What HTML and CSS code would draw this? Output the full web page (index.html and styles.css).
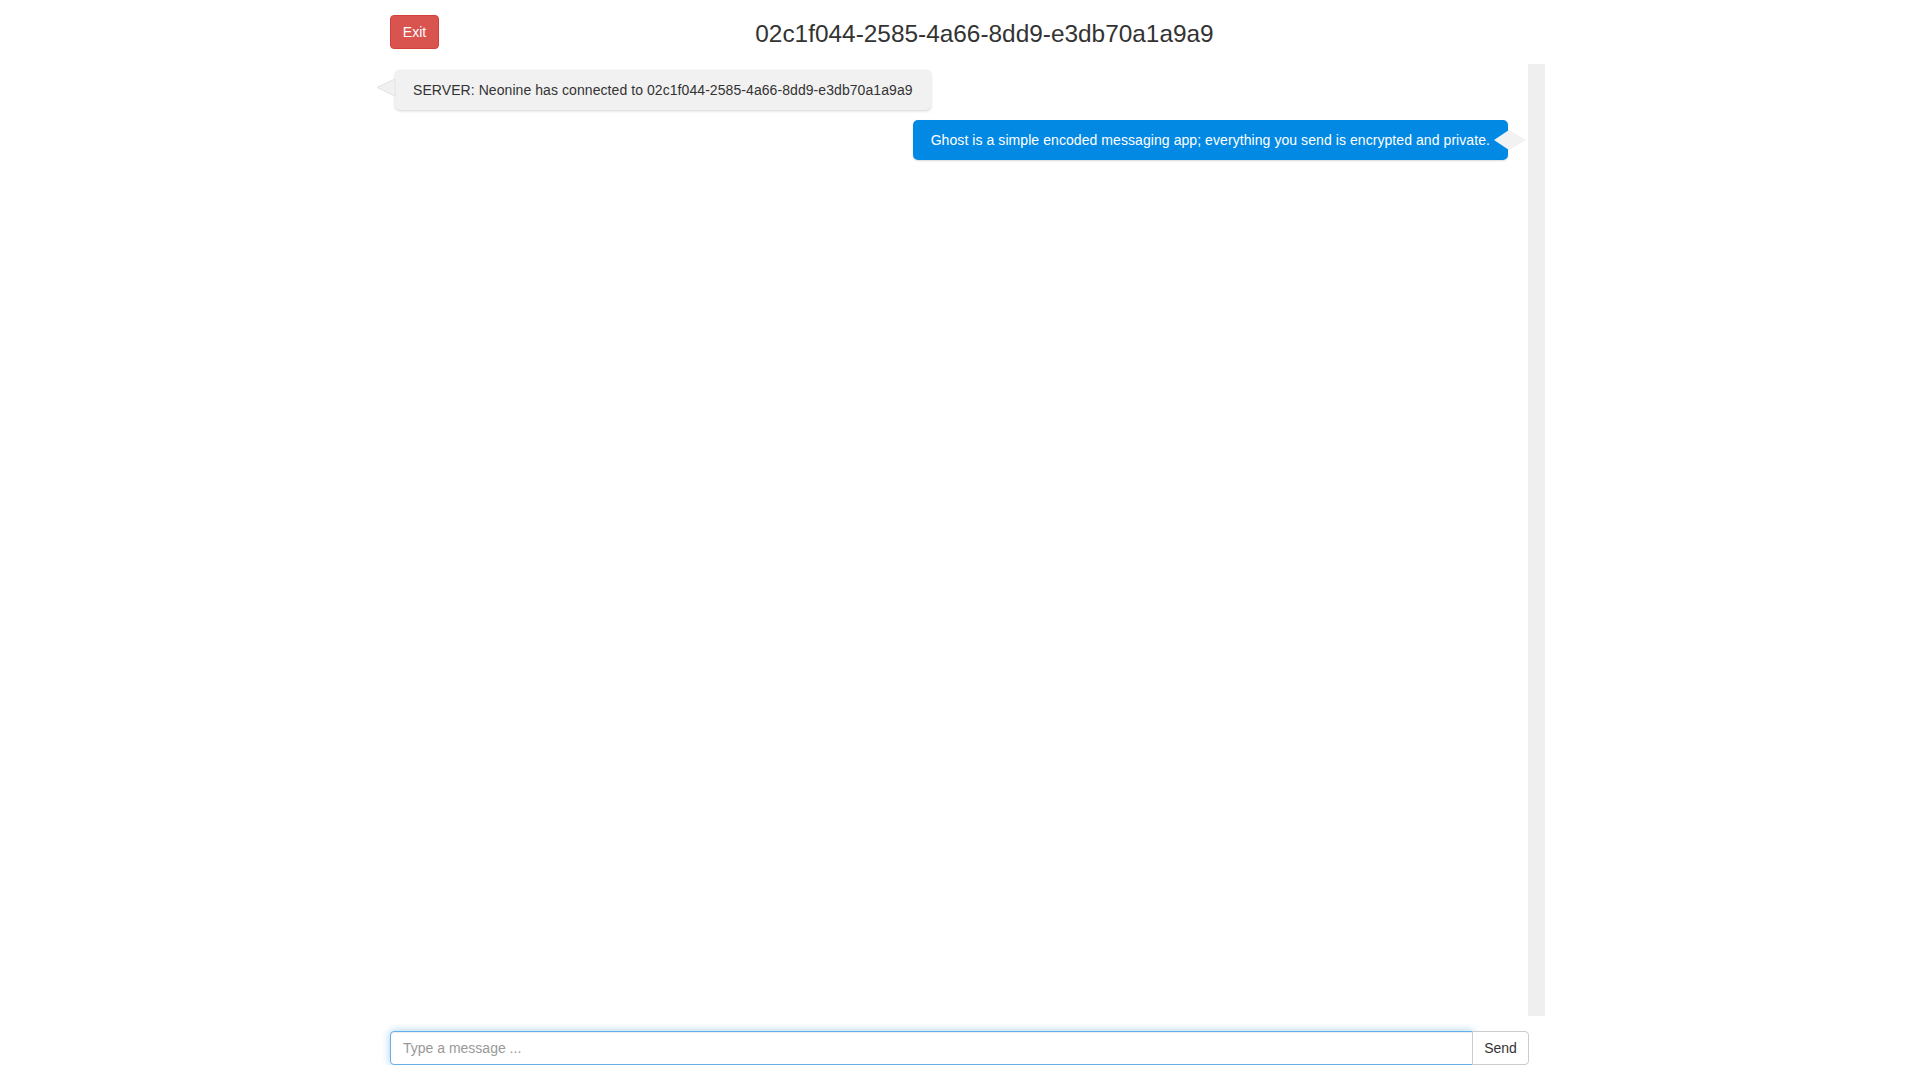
FILE: index.html
```html
<!DOCTYPE html>
<html>
<head>
<meta charset="utf-8">
<title>Ghost</title>
<link rel="stylesheet" href="styles.css">
</head>
<body>
<div class="page">
  <div class="header">
    <button class="btn-exit">Exit</button>
    <h1 class="room-title">02c1f044-2585-4a66-8dd9-e3db70a1a9a9</h1>
  </div>
  <div class="chat">
    <div class="messages">
      <div class="msg msg-server">
        <svg class="arrow-left" width="20" height="20" viewBox="0 0 20 20"><polygon points="19,1 1,9.5 19,18" fill="#f1f1f1" stroke="#e2e2e2" stroke-width="1"/></svg>
        SERVER: Neonine has connected to 02c1f044-2585-4a66-8dd9-e3db70a1a9a9
      </div>
      <div class="msg msg-own">
        Ghost is a simple encoded messaging app; everything you send is encrypted and private.
        <svg class="arrow-right" width="34" height="22" viewBox="0 0 34 22"><polygon points="1,11 16,1 33,11 16,21" fill="#f2f2f2"/></svg>
      </div>
    </div>
    <div class="track"></div>
  </div>
  <div class="composer">
    <input class="msg-input" type="text" placeholder="Type a message ..." autofocus>
    <button class="btn-send">Send</button>
  </div>
</div>
</body>
</html>
```
FILE: styles.css
```css
html, body {
  margin: 0;
  padding: 0;
  background: #fff;
}
body {
  font-family: "Liberation Sans", Arial, sans-serif;
  font-size: 14px;
  color: #333;
}
.page {
  width: 1140px;
  margin: 0 auto;
  padding-top: 15px;
}
.header {
  display: flex;
  align-items: center;
  height: 34px;
}
.btn-exit {
  width: 49px;
  height: 34px;
  background: #d9534f;
  border: 1px solid #d43f3a;
  border-radius: 4px;
  color: #fff;
  font-family: inherit;
  font-size: 14px;
  padding: 0;
}
.room-title {
  flex: 1;
  margin: 0;
  padding-top: 3px;
  text-align: center;
  font-size: 24.4px;
  font-weight: normal;
  color: #333;
  line-height: 34px;
}
.chat {
  margin-top: 15px;
  width: 1155px;
  height: 952px;
  display: flex;
}
.messages {
  flex: 1;
  display: flex;
  flex-direction: column;
  align-items: flex-start;
  padding: 6px 20px 0 5px;
}
.msg {
  position: relative;
  box-sizing: border-box;
  height: 40px;
  line-height: 20px;
  padding: 10px 18px;
  border-radius: 5px;
  white-space: nowrap;
  letter-spacing: 0.07px;
}
.msg-server {
  background: #f1f1f1;
  box-shadow: 0 1px 3px rgba(0, 0, 0, 0.18);
}
.msg-own {
  align-self: flex-end;
  margin-top: 10px;
  background: #0289e4;
  color: #fff;
  box-shadow: 0 1px 2px rgba(0, 0, 0, 0.15);
}
.arrow-left {
  position: absolute;
  left: -19px;
  top: 8px;
}
.arrow-right {
  position: absolute;
  right: -19px;
  top: 9px;
}
.track {
  width: 17px;
  background: #efefef;
}
.composer {
  display: flex;
  margin-top: 15px;
  width: 1139px;
}
.msg-input {
  flex: 1;
  box-sizing: border-box;
  height: 34px;
  padding: 6px 12px;
  font-family: inherit;
  font-size: 14px;
  color: #555;
  border: 1px solid #66afe9;
  border-radius: 4px 0 0 4px;
  outline: none;
  box-shadow: inset 0 1px 1px rgba(0, 0, 0, 0.075), 0 0 8px rgba(102, 175, 233, 0.6);
}
.msg-input::placeholder {
  color: #999;
}
.btn-send {
  box-sizing: border-box;
  width: 57px;
  height: 34px;
  margin-left: -1px;
  background: #fff;
  border: 1px solid #ccc;
  border-radius: 0 4px 4px 0;
  font-family: inherit;
  font-size: 14px;
  color: #333;
  padding: 0;
}
```
